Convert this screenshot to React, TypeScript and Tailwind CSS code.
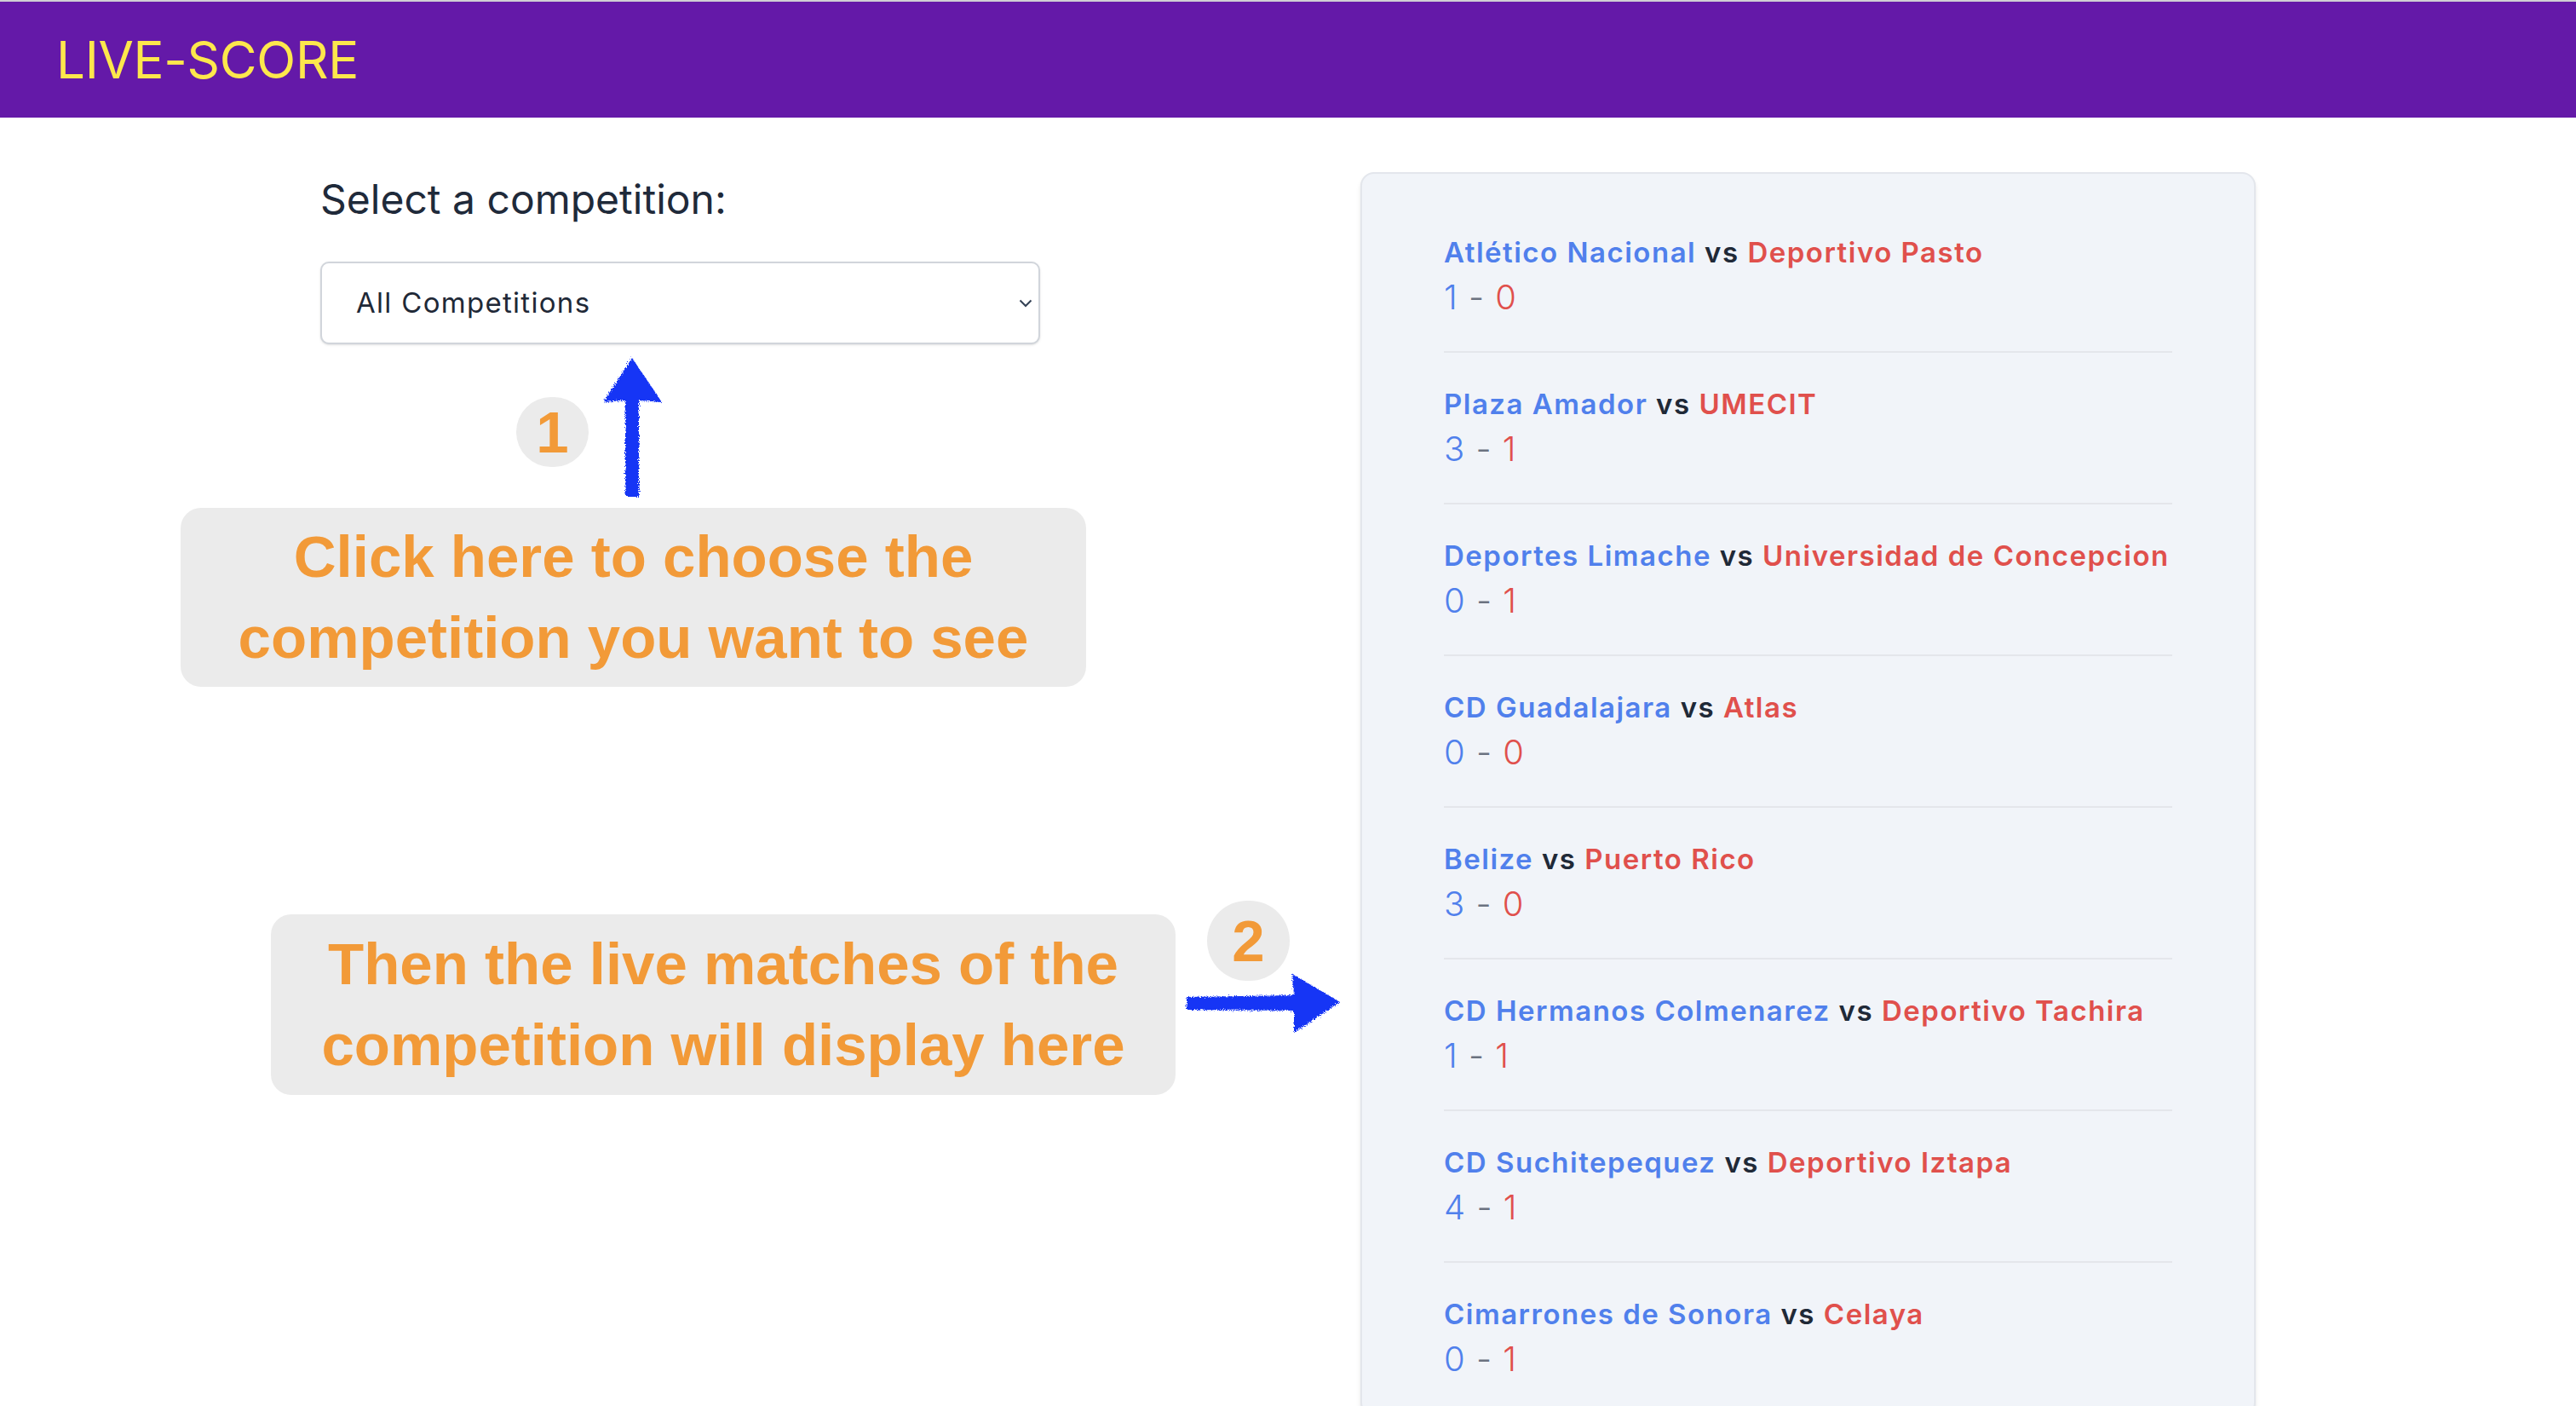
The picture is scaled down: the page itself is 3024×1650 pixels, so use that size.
import { useState } from "react"

const matches = [
  { home: "Atlético Nacional", away: "Deportivo Pasto", homeScore: 1, awayScore: 0 },
  { home: "Plaza Amador", away: "UMECIT", homeScore: 3, awayScore: 1 },
  { home: "Deportes Limache", away: "Universidad de Concepcion", homeScore: 0, awayScore: 1 },
  { home: "CD Guadalajara", away: "Atlas", homeScore: 0, awayScore: 0 },
  { home: "Belize", away: "Puerto Rico", homeScore: 3, awayScore: 0 },
  { home: "CD Hermanos Colmenarez", away: "Deportivo Tachira", homeScore: 1, awayScore: 1 },
  { home: "CD Suchitepequez", away: "Deportivo Iztapa", homeScore: 4, awayScore: 1 },
  { home: "Cimarrones de Sonora", away: "Celaya", homeScore: 0, awayScore: 1 },
]

function RoughFilter() {
  return (
    <svg width="0" height="0" className="absolute">
      <defs>
        <filter id="rough" x="-10%" y="-10%" width="120%" height="120%">
          <feTurbulence type="fractalNoise" baseFrequency="0.85" numOctaves="2" seed="3" />
          <feDisplacementMap in="SourceGraphic" scale="6" />
        </filter>
      </defs>
    </svg>
  )
}

export default function App() {
  const [competition, setCompetition] = useState("all")

  return (
    <div className="relative min-h-screen bg-white font-[Inter,sans-serif]">
      <RoughFilter />
      {/* Header */}
      <header className="flex h-[138px] items-center border-t-2 border-[#cfcfd4] bg-[#6419a8] px-[66px]">
        <h1 className="text-[60px] font-normal leading-none tracking-[-0.3px] text-[#fde74c]">LIVE-SCORE</h1>
      </header>

      <main className="flex justify-between px-[376px] pt-[64px]">
        {/* Competition picker */}
        <div className="w-[845px]">
          <label htmlFor="competition" className="block text-[48px] leading-[64px] text-[#1f2a3a]">
            Select a competition:
          </label>
          <div className="relative mt-[41px]">
            <select
              id="competition"
              value={competition}
              onChange={(e) => setCompetition(e.target.value)}
              className="h-[97px] w-full appearance-none rounded-[10px] border-2 border-[#d1d5db] bg-white pl-[40px] text-[33px] tracking-[1.3px] text-[#1f2937] shadow-sm outline-none"
            >
              <option value="all">All Competitions</option>
            </select>
            <svg
              className="pointer-events-none absolute right-[9px] top-[44px]"
              width="16"
              height="10"
              viewBox="0 0 16 10"
              fill="none"
            >
              <path d="M1.5 1.5 L8 8 L14.5 1.5" stroke="#334155" strokeWidth="2" />
            </svg>
          </div>
        </div>

        {/* Live matches */}
        <section className="w-[1051px] rounded-2xl border-2 border-[#e3e6ec] bg-[#f1f4f9] px-24 pt-8 shadow-md">
          {matches.map((m) => (
            <div key={m.home} className="border-b-2 border-[#e4e6eb] pb-[34px] pt-[36px]">
              <p className="text-[33px] font-semibold leading-[48px] tracking-[1.5px]">
                <span className="text-[#5080ec]">{m.home}</span>{" "}
                <span className="text-[#1f2937]">vs</span>{" "}
                <span className="text-[#e0504c]">{m.away}</span>
              </p>
              <p className="text-[40px] font-light leading-[58px] tracking-[1px]">
                <span className="text-[#5080ec]">{m.homeScore}</span>{" "}
                <span className="text-[#6b7280]">-</span>{" "}
                <span className="text-[#e0504c]">{m.awayScore}</span>
              </p>
            </div>
          ))}
        </section>
      </main>

      {/* Tutorial annotations laid over the page */}
      <div className="pointer-events-none absolute inset-0 font-['Liberation_Sans',Arial,sans-serif] font-bold text-[#f29a38]">
        <div className="absolute left-[606px] top-[466px] flex h-[82px] w-[85px] items-center justify-center rounded-full bg-[#ebebeb] text-[69px] leading-none">
          1
        </div>
        <svg className="absolute left-[700px] top-[414px]" width="84" height="176" viewBox="0 0 84 176">
          <path
            d="M42 6 L77 58 L50 56 L50 169 L34 169 L34 56 L8 58 Z"
            fill="#1636f5"
            filter="url(#rough)"
          />
        </svg>
        <div className="absolute left-[212px] top-[596px] flex h-[210px] w-[1063px] items-center justify-center rounded-[24px] bg-[#ebebeb] text-center text-[69px] leading-[95px]">
          Click here to choose the
          <br />
          competition you want to see
        </div>

        <div className="absolute left-[318px] top-[1073px] flex h-[212px] w-[1062px] items-center justify-center rounded-[24px] bg-[#ebebeb] text-center text-[69px] leading-[95px]">
          Then the live matches of the
          <br />
          competition will display here
        </div>
        <div className="absolute left-[1417px] top-[1057px] flex h-[94px] w-[97px] items-center justify-center rounded-full bg-[#ebebeb] text-[69px] leading-none">
          2
        </div>
        <svg className="absolute left-[1386px] top-[1136px]" width="194" height="82" viewBox="0 0 194 82">
          <path
            d="M7 34 L133 32 L131 7 L187 40 L133 76 L133 50 L7 49 Z"
            fill="#1636f5"
            filter="url(#rough)"
          />
        </svg>
      </div>
    </div>
  )
}
